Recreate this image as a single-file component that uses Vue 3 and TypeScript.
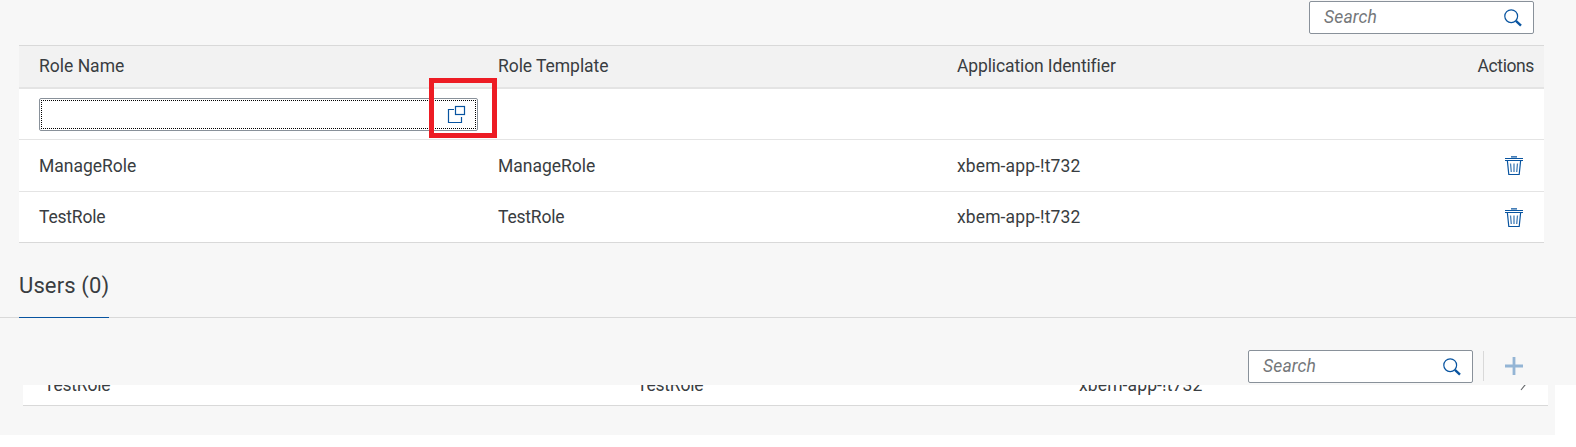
<script setup lang="ts">
interface RoleRow {
  name: string
  template: string
  app: string
}

const roles: RoleRow[] = [
  { name: 'ManageRole', template: 'ManageRole', app: 'xbem-app-!t732' },
  { name: 'TestRole', template: 'TestRole', app: 'xbem-app-!t732' },
]
</script>

<template>
  <main class="page">
    <section class="panel">
      <div class="toolbar">
        <div class="search">
          <span class="placeholder">Search</span>
          <svg class="lens" width="20" height="20" viewBox="0 0 20 20">
            <circle cx="8.2" cy="8.2" r="6.4" />
            <path class="handle" d="M12.9 12.9 L18 17.6" />
          </svg>
        </div>
      </div>

      <div class="table">
        <div class="row head">
          <span class="w-role">Role Name</span>
          <span class="w-template">Role Template</span>
          <span class="w-ident">Application Identifier</span>
          <span class="end w-actions">Actions</span>
        </div>
        <div class="row entry">
          <div class="input">
            <div class="focus">
              <svg width="20" height="20" viewBox="0 0 20 20">
                <path d="M8 4.5 H2.5 V17.5 H15.5 V12" />
                <rect x="9.5" y="1.5" width="9" height="8" />
              </svg>
            </div>
            <div class="marker"></div>
          </div>
        </div>
        <div v-for="role in roles" :key="role.name" class="row item">
          <span :class="{ 'w-role': role.name === 'ManageRole' }">{{ role.name }}</span>
          <span :class="{ 'w-role': role.name === 'ManageRole' }">{{ role.template }}</span>
          <span class="w-app">{{ role.app }}</span>
          <span class="end trash">
            <svg width="20" height="20" viewBox="0 0 20 20">
              <path d="M7 .8 H13 M1 2.5 H19 M1 4.5 H19 M3.4 5 L4.8 18.5 H15.2 L16.6 5" />
              <path class="slat" d="M6.5 7.5 L7.3 16 M10 7.5 V16 M13.5 7.5 L12.7 16" />
            </svg>
          </span>
        </div>
      </div>

      <div class="tabs"><h2 class="tab">Users (0)</h2></div>

      <div class="toolbar users">
        <div class="search">
          <span class="placeholder">Search</span>
          <svg class="lens" width="20" height="20" viewBox="0 0 20 20">
            <circle cx="8.2" cy="8.2" r="6.4" />
            <path class="handle" d="M12.9 12.9 L18 17.6" />
          </svg>
        </div>
        <i class="divider"></i>
        <svg class="plus" width="18" height="18" viewBox="0 0 18 18"><path d="M9 0 V18 M0 9 H18" /></svg>
      </div>
    </section>

    <section class="rest">
      <div class="cut">
        <span>TestRole</span>
        <span>TestRole</span>
        <span class="w-app">xbem-app-!t732</span>
        <svg width="8" height="18" viewBox="0 0 8 18"><path d="M1 1 L7 8.5 L1 16" /></svg>
      </div>
    </section>
  </main>
</template>

<style>
body {
  margin: 0;
  background: #fff;
}
</style>

<style scoped>
.page {
  width: 1576px;
  height: 447px;
  overflow: hidden;
  color: #393d41;
  font: 17.5px/20px Roboto, 'Liberation Sans', sans-serif;
  letter-spacing: -0.2px;
}
.w-role {
  letter-spacing: 0;
}
.w-template {
  letter-spacing: -0.05px;
}
.w-ident {
  letter-spacing: -0.12px;
}
.w-actions {
  letter-spacing: -0.4px;
}
.w-app {
  letter-spacing: 0.12px;
}
.panel {
  height: 385px;
  background: #f7f7f7;
}
.toolbar {
  display: flex;
  justify-content: flex-end;
  box-sizing: border-box;
  height: 45px;
  padding: 1px 42px 0 0;
}
.search {
  display: flex;
  justify-content: space-between;
  align-items: center;
  box-sizing: border-box;
  width: 225px;
  height: 33px;
  padding: 0 10px 0 14px;
  border: 1px solid #89919a;
  border-radius: 2px;
  background: #fff;
}
.placeholder {
  padding-bottom: 2px;
  color: #74777a;
  font-style: italic;
  letter-spacing: 0.15px;
}
svg {
  display: block;
  flex: none;
  fill: none;
  stroke: #0854a0;
  stroke-width: 1.2;
}
.handle {
  stroke-width: 2.4;
}
.table {
  width: 1525px;
  margin-left: 19px;
  background: #fff;
}
.row {
  display: grid;
  grid-template-columns: 459px 459px 459px 118px;
  align-items: center;
  box-sizing: border-box;
  padding: 0 10px 0 20px;
  border-bottom: 1px solid #e4e4e4;
  white-space: nowrap;
}
.head {
  height: 44px;
  padding-bottom: 1px;
  border-top: 1px solid #d9d9d9;
  border-bottom: 2px solid #e4e4e4;
  background: #f2f2f2;
}
.entry {
  height: 51px;
}
.item {
  height: 52px;
}
.item:last-child {
  height: 51px;
  border-bottom-color: #d9d9d9;
}
.end {
  justify-self: end;
}
.trash {
  margin: 1px 10px 0 0;
}
.slat {
  stroke-width: 1.3;
  opacity: .75;
}
.input {
  position: relative;
  box-sizing: border-box;
  width: 439px;
  height: 33px;
  padding: 1px;
  border: 1px solid #89919a;
  border-radius: 2px;
}
.focus {
  display: flex;
  justify-content: flex-end;
  align-items: center;
  box-sizing: border-box;
  height: 29px;
  padding: 1px 9px 0 0;
  border: 1px dotted #000;
}
.marker {
  position: absolute;
  top: -21px;
  left: 389px;
  box-sizing: border-box;
  width: 68px;
  height: 60px;
  border: 5px solid #ed1c24;
}
.tabs {
  box-sizing: border-box;
  height: 75px;
  padding: 28px 0 0 19px;
  border-bottom: 1px solid #d9d9d9;
}
.tab {
  box-sizing: border-box;
  width: 90px;
  height: 47px;
  margin: 0;
  border-bottom: 1px solid #0854a0;
  font-size: 22px;
  font-weight: 400;
  line-height: 30px;
  letter-spacing: 0.12px;
  white-space: nowrap;
}
.users {
  height: 67px;
  padding: 32px 53px 0 0;
}
.divider {
  width: 1px;
  height: 30px;
  margin: 1px 21px 0 10px;
  background: #d9d9d9;
}
.plus {
  margin-top: 7px;
  stroke: #94b5d5;
  stroke-width: 2.8;
}
.rest {
  box-sizing: border-box;
  width: 1555px;
  height: 50px;
  padding-left: 23px;
  background: #f7f7f7;
}
.cut {
  display: grid;
  grid-template-columns: 593px 442px 441px 8px;
  grid-template-rows: 10px;
  align-items: end;
  box-sizing: border-box;
  width: 1525px;
  height: 21px;
  padding: 0 0 10px 21px;
  overflow: hidden;
  border-bottom: 1px solid #d9d9d9;
  background: #fff;
  white-space: nowrap;
}
.cut svg {
  margin-bottom: 3px;
  stroke: #6a6d70;
}
</style>
